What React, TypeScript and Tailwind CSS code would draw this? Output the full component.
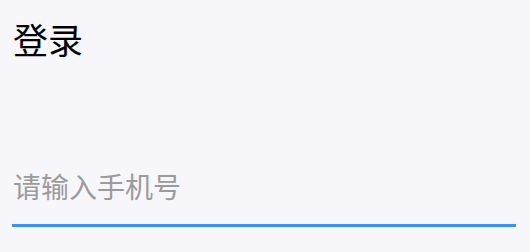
export default function App() {
  return (
    <div
      className="w-[530px] h-[252px] bg-[#f7f7fb] px-[12px] flex flex-col"
      style={{ fontFamily: '"Noto Sans CJK SC", "Noto Sans", sans-serif' }}
    >
      <h1 className="mt-[15px] h-[48px] text-[35px] leading-[48px] text-black font-normal pl-[1px]">登录</h1>
      <div className="mt-[105px] w-[504px] border-b-[3px] border-[#3d8ef5] pb-[20px]">
        <input
          className="block w-full h-[36px] p-0 bg-transparent outline-none text-[28px] leading-[36px] pl-[1px] text-black placeholder:text-[#9b9b9b]"
          placeholder="请输入手机号"
        />
      </div>
    </div>
  );
}
